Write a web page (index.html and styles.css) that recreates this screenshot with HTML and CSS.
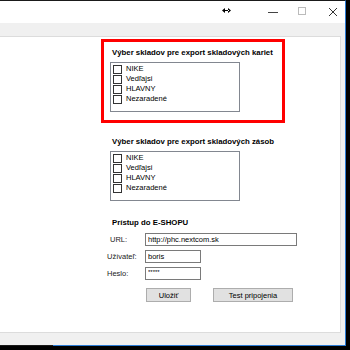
FILE: index.html
```html
<!DOCTYPE html>
<html lang="sk">
<head>
    <meta charset="UTF-8">
    <title>Nastavenia exportu</title>
    <link rel="stylesheet" href="styles.css">
</head>
<body>
    <div class="window">
        <!-- Title bar -->
        <div class="titlebar">
            <svg class="resize" width="9" height="5" viewBox="0 0 9 5">
                <path d="M0 2.5 L3 0 V5 Z M9 2.5 L6 0 V5 Z M2 2 H7 V3 H2 Z" fill="#000"/>
            </svg>
            <div class="controls">
                <svg width="10" height="10" viewBox="0 0 10 10"><path d="M0 5.5 H10" stroke="#444" stroke-width="1"/></svg>
                <svg width="10" height="10" viewBox="0 0 10 10"><rect x="0.5" y="0.5" width="7" height="7" fill="none" stroke="#bbb"/></svg>
                <svg width="10" height="10" viewBox="0 0 10 10"><path d="M1 1 L9 9 M9 1 L1 9" stroke="#333" stroke-width="1"/></svg>
            </div>
        </div>

        <div class="client">
            <div class="panel">
                <div class="content">
                    <!-- Warehouses for card export -->
                    <section class="group selected">
                        <h2>Výber skladov pre export skladových kariet</h2>
                        <ul class="checklist">
                            <li><span class="box"></span>NIKE</li>
                            <li><span class="box"></span>Vedľajsi</li>
                            <li><span class="box"></span>HLAVNY</li>
                            <li><span class="box"></span>Nezaradené</li>
                        </ul>
                    </section>

                    <!-- Warehouses for stock export -->
                    <section class="group">
                        <h2>Výber skladov pre export skladových zásob</h2>
                        <ul class="checklist">
                            <li><span class="box"></span>NIKE</li>
                            <li><span class="box"></span>Vedľajsi</li>
                            <li><span class="box"></span>HLAVNY</li>
                            <li><span class="box"></span>Nezaradené</li>
                        </ul>
                    </section>

                    <!-- E-shop access -->
                    <section class="eshop">
                        <h2>Prístup do E-SHOPU</h2>
                        <div class="field url">
                            <label>URL:</label>
                            <input class="wide" type="text" value="http://phc.nextcom.sk">
                        </div>
                        <div class="field">
                            <label>Užívateľ:</label>
                            <input type="text" value="boris">
                        </div>
                        <div class="field">
                            <label>Heslo:</label>
                            <input class="masked" type="text" value="*****">
                        </div>
                        <div class="buttons">
                            <button class="save">Uložiť</button>
                            <button class="test">Test pripojenia</button>
                        </div>
                    </section>
                </div>
            </div>
        </div>
        <div class="bottom-edge"></div>
    </div>
</body>
</html>
```

FILE: styles.css
```css
body {
    margin: 0;
    padding: 0;
    background-color: #000000;
    font-family: 'Liberation Sans', Arial, sans-serif;
    font-size: 7.5px;
    color: #000000;
    width: 350px;
    height: 350px;
    overflow: hidden;
}

.window {
    width: 345px;
    border-top: 1px solid #1a1a1a;
    border-right: 1px solid #2b7bd4;
    background-color: #ffffff;
}

/* Title bar */
.titlebar {
    height: 22px;
    display: flex;
    align-items: center;
    background-color: #ffffff;
}
.resize {
    margin-left: 222px;
    margin-top: -3px;
}
.controls {
    display: flex;
    gap: 20px;
    margin-left: 37px;
}

/* Client area */
.client {
    background-color: #f0f0f0;
    padding: 13px 4px 12px 0;
}
.panel {
    background-color: #ffffff;
    border: 1px solid #dcdcdc;
    margin-left: -1px;
    height: 295px;
}
.content {
    padding: 2px 0 0 101px;
}

/* Checklist groups */
.group {
    width: 172px;
    border: 3px solid transparent;
    padding: 4px 0 8px 6px;
}
.group.selected {
    border-color: #ff0000;
}
.group + .group {
    margin-top: 5px;
}
h2 {
    font-size: 7.8px;
    font-weight: bold;
    line-height: 13px;
    margin: 0;
    padding-left: 2px;
    white-space: nowrap;
}
.checklist {
    list-style: none;
    margin: 3px 0 0;
    padding: 1px 0 0 2px;
    width: 126px;
    height: 47px;
    border: 1px solid #828790;
    background-color: #ffffff;
}
.checklist li {
    display: flex;
    align-items: center;
    height: 10px;
    line-height: 10px;
}
.box {
    width: 7px;
    height: 7px;
    border: 1px solid #333333;
    background-color: #ffffff;
    margin-right: 4px;
}

/* E-shop access */
.eshop {
    margin-top: 4px;
    padding-left: 9px;
}
.eshop h2 {
    padding-left: 2px;
    margin-bottom: 3px;
}
.field {
    display: flex;
    align-items: center;
    height: 14px;
    margin-bottom: 3px;
    margin-left: -3px;
}
.field label {
    width: 38px;
    color: #222222;
}
.field.url label {
    padding-left: 3px;
    width: 35px;
}
.field input {
    box-sizing: border-box;
    width: 56px;
    height: 13px;
    border: 1px solid #7a7a7a;
    padding: 0 2px;
    font-family: inherit;
    font-size: 7.5px;
    color: #000000;
    outline: none;
}
.field input.wide {
    width: 152px;
}
.field input.masked {
    font-size: 6px;
    padding-bottom: 3px;
}

.buttons {
    display: flex;
    gap: 22px;
    margin-top: 8px;
    padding-left: 36px;
}
.buttons button {
    box-sizing: border-box;
    height: 14px;
    background-color: #e1e1e1;
    border: 1px solid #adadad;
    font-family: inherit;
    font-size: 7.5px;
    color: #000000;
    padding: 0;
}
.buttons .save {
    width: 45px;
}
.buttons .test {
    width: 80px;
}

.bottom-edge {
    height: 1px;
    background: linear-gradient(to right, #1a1a1a 53px, #2b7bd4 53px);
}
```
